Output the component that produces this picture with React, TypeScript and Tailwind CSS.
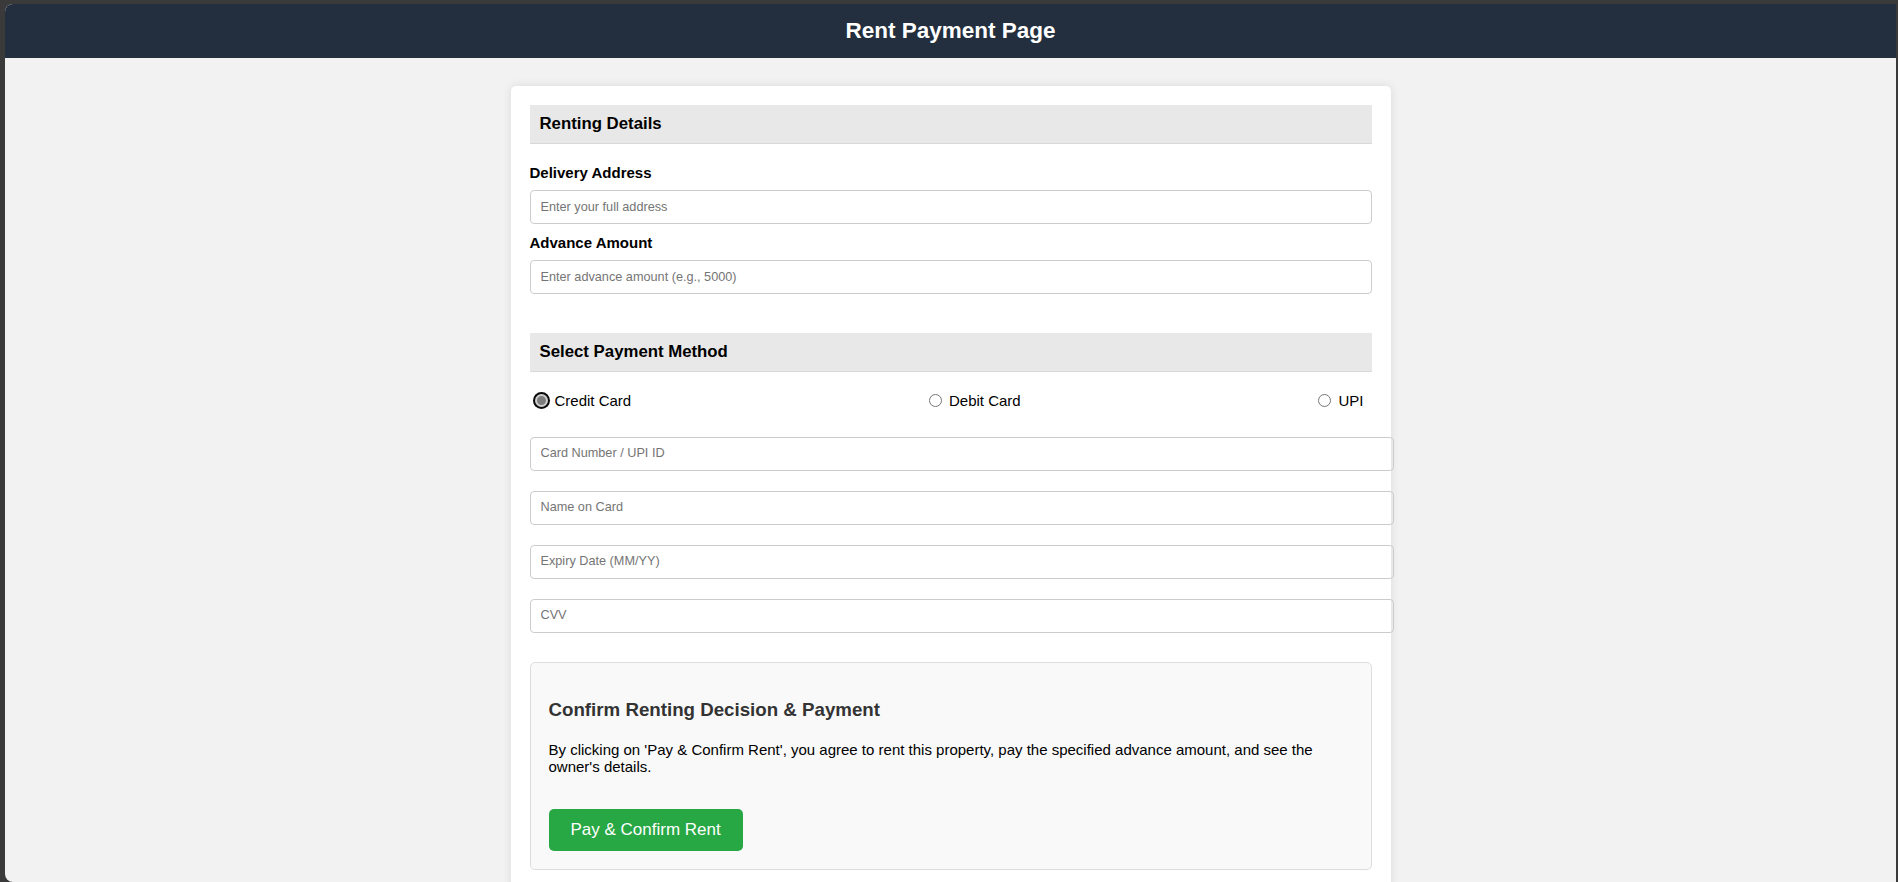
import React from "react";

type Method = "credit" | "debit" | "upi";

const methods: { id: Method; label: string }[] = [
  { id: "credit", label: "Credit Card" },
  { id: "debit", label: "Debit Card" },
  { id: "upi", label: "UPI" },
];

const cardFields = ["Card Number / UPI ID", "Name on Card", "Expiry Date (MM/YY)", "CVV"];

const SectionHeader = ({ title, className = "" }: { title: string; className?: string }) => (
  <div className={`bg-[#e8e8e8] border-b border-[#d9d9d9] px-[10px] py-[10px] ${className}`}>
    <h2 className="text-[16.8px] leading-[18px] font-bold text-black">{title}</h2>
  </div>
);

const Radio = ({ checked }: { checked: boolean }) =>
  checked ? (
    <span className="ml-[5px] mr-[7px] w-[13px] h-[13px] shrink-0 rounded-full bg-[#7d7d7d] border-[2px] border-[#cfcfcf] shadow-[0_0_0_2px_#0a0a0a]" />
  ) : (
    <span className="ml-[5px] mr-[7px] w-[13px] h-[13px] shrink-0 rounded-full bg-white border border-[#767676]" />
  );

export default function App() {
  const [method, setMethod] = React.useState<Method>("credit");

  return (
    <div className="h-screen bg-[#3a3a3a] pt-[4px] pl-[5px] pr-[2px] font-['Liberation_Sans',Arial,sans-serif]">
      <div className="h-full overflow-hidden rounded-l-[8px] bg-[#f2f2f2]">
        <header className="h-[54px] bg-[#232f3e] flex items-center justify-center">
          <h1 className="text-white font-bold text-[22.5px] leading-none">Rent Payment Page</h1>
        </header>

        <main className="mx-auto mt-[28px] w-[880px] bg-white rounded-[5px] shadow-[0_0_10px_rgba(0,0,0,0.1)] px-[19px] pt-[19px] pb-[20px]">
          <SectionHeader title="Renting Details" />

          <label className="block mt-[20px] text-[15px] leading-[17px] font-bold text-black">Delivery Address</label>
          <input
            type="text"
            placeholder="Enter your full address"
            className="block mt-[9px] w-full h-[34px] px-[10px] border border-[#cccccc] rounded-[4px] text-[12.7px] outline-none placeholder:text-[#757575]"
          />

          <label className="block mt-[10px] text-[15px] leading-[17px] font-bold text-black">Advance Amount</label>
          <input
            type="text"
            placeholder="Enter advance amount (e.g., 5000)"
            className="block mt-[9px] w-full h-[34px] px-[10px] border border-[#cccccc] rounded-[4px] text-[12.7px] outline-none placeholder:text-[#757575]"
          />

          <SectionHeader title="Select Payment Method" className="mt-[39px]" />

          <div className="mt-[20px] h-[17px] flex items-center justify-between">
            {methods.map((m) => (
              <label
                key={m.id}
                className="flex items-center mr-[8px] text-[15px] leading-[17px] text-black cursor-pointer"
                onClick={() => setMethod(m.id)}
              >
                <Radio checked={method === m.id} />
                {m.label}
              </label>
            ))}
          </div>

          {cardFields.map((f, i) => (
            <input
              key={f}
              type="text"
              placeholder={f}
              className={`block box-content w-full h-[16px] py-[8px] px-[10px] border border-[#cccccc] rounded-[4px] text-[12.7px] outline-none placeholder:text-[#757575] ${
                i === 0 ? "mt-[28px]" : "mt-[20px]"
              }`}
            />
          ))}

          <div className="mt-[29px] bg-[#f9f9f9] border border-[#dddddd] rounded-[5px] p-[18px]">
            <h3 className="mt-[18px] text-[18.72px] leading-[22px] font-bold text-[#333333]">
              Confirm Renting Decision &amp; Payment
            </h3>
            <p className="mt-[20px] text-[15px] leading-[17.25px] text-black">
              By clicking on 'Pay &amp; Confirm Rent', you agree to rent this property, pay the specified advance amount, and see the owner's details.
            </p>
            <button className="mt-[33px] h-[42px] px-[22px] bg-[#28a745] text-white text-[17px] rounded-[5px]">
              Pay &amp; Confirm Rent
            </button>
          </div>
        </main>
      </div>
    </div>
  );
}
